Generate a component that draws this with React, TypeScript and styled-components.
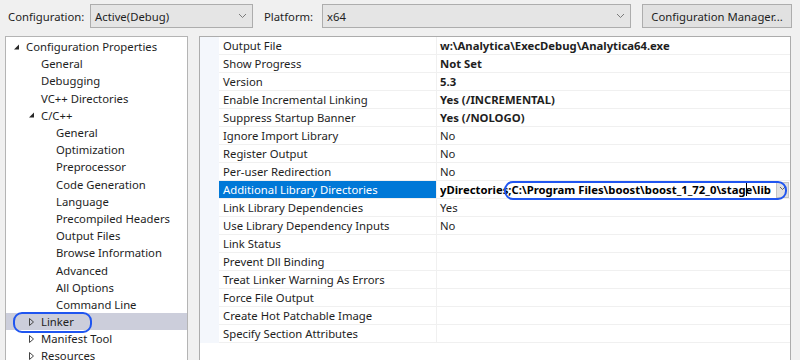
import React from "react";
import styled, { createGlobalStyle } from "styled-components";

const GlobalStyle = createGlobalStyle`
  html, body {
    margin: 0;
    padding: 0;
    background: #f0f0f0;
  }
  * {
    box-sizing: border-box;
  }
`;

const FONT = `"Noto Sans", "Open Sans", sans-serif`;

type TreeItem = {
  label: string;
  level: number;
  glyph?: "open" | "closed";
  selected?: boolean;
};

const treeItems: TreeItem[] = [
  { label: "Configuration Properties", level: 0, glyph: "open" },
  { label: "General", level: 1 },
  { label: "Debugging", level: 1 },
  { label: "VC++ Directories", level: 1 },
  { label: "C/C++", level: 1, glyph: "open" },
  { label: "General", level: 2 },
  { label: "Optimization", level: 2 },
  { label: "Preprocessor", level: 2 },
  { label: "Code Generation", level: 2 },
  { label: "Language", level: 2 },
  { label: "Precompiled Headers", level: 2 },
  { label: "Output Files", level: 2 },
  { label: "Browse Information", level: 2 },
  { label: "Advanced", level: 2 },
  { label: "All Options", level: 2 },
  { label: "Command Line", level: 2 },
  { label: "Linker", level: 1, glyph: "closed", selected: true },
  { label: "Manifest Tool", level: 1, glyph: "closed" },
  { label: "Resources", level: 1, glyph: "closed" },
];

type Prop = {
  name: string;
  value?: string;
  bold?: boolean;
  editing?: boolean;
};

const props: Prop[] = [
  { name: "Output File", value: "w:\\Analytica\\ExecDebug\\Analytica64.exe", bold: true },
  { name: "Show Progress", value: "Not Set", bold: true },
  { name: "Version", value: "5.3", bold: true },
  { name: "Enable Incremental Linking", value: "Yes (/INCREMENTAL)", bold: true },
  { name: "Suppress Startup Banner", value: "Yes (/NOLOGO)", bold: true },
  { name: "Ignore Import Library", value: "No" },
  { name: "Register Output", value: "No" },
  { name: "Per-user Redirection", value: "No" },
  { name: "Additional Library Directories", editing: true },
  { name: "Link Library Dependencies", value: "Yes" },
  { name: "Use Library Dependency Inputs", value: "No" },
  { name: "Link Status" },
  { name: "Prevent Dll Binding" },
  { name: "Treat Linker Warning As Errors" },
  { name: "Force File Output" },
  { name: "Create Hot Patchable Image" },
  { name: "Specify Section Attributes" },
];

const Chevron = () => (
  <svg width="9" height="6" viewBox="0 0 9 6">
    <polyline points="1,1 4.5,4.5 8,1" fill="none" stroke="#7a7a7a" strokeWidth="1" />
  </svg>
);

const Glyph: React.FC<{ kind?: "open" | "closed" }> = ({ kind }) => {
  if (kind === "open")
    return (
      <svg width="7" height="8" viewBox="0 0 7 8">
        <polygon points="6,1.5 6,6.5 1,6.5" fill="#262626" />
      </svg>
    );
  if (kind === "closed")
    return (
      <svg width="7" height="10" viewBox="0 0 7 10">
        <polygon points="1.5,1.5 5.5,5 1.5,8.5" fill="none" stroke="#444" strokeWidth="1" />
      </svg>
    );
  return null;
};

export default function App() {
  return (
    <>
      <GlobalStyle />
      <Window>
        <Toolbar>
          <Label>Configuration:</Label>
          <Combo $width={163}>
            <span>Active(Debug)</span>
            <Chevron />
          </Combo>
          <Label $gap={11}>Platform:</Label>
          <Combo $width={309}>
            <span>x64</span>
            <Chevron />
          </Combo>
          <Button>Configuration Manager...</Button>
        </Toolbar>
        <Body>
          <TreePanel>
            {treeItems.map((item, i) => (
              <TreeRow key={i} $selected={item.selected}>
                <GlyphBox $level={item.level}>
                  <Glyph kind={item.glyph} />
                </GlyphBox>
                <TreeLabel>{item.label}</TreeLabel>
                {item.selected && <TreeCallout />}
              </TreeRow>
            ))}
          </TreePanel>
          <GridPanel>
            <Grid>
              {props.map((p, i) => (
                <GridRow key={i}>
                  <Margin />
                  <NameCell $selected={p.editing}>{p.name}</NameCell>
                  <ValueCell $bold={p.bold}>
                    {p.editing ? (
                      <Editor>
                        <EditText>
                          yDirectories;C:\Program Files\boost\boost_1_72_0\stag
                          <Caret />
                          e\lib
                        </EditText>
                        <DropButton>
                          <svg width="7" height="5" viewBox="0 0 7 5">
                            <polyline points="1,1 3.5,3.5 6,1" fill="none" stroke="#666" strokeWidth="1" />
                          </svg>
                        </DropButton>
                        <EditCallout />
                      </Editor>
                    ) : (
                      p.value
                    )}
                  </ValueCell>
                </GridRow>
              ))}
            </Grid>
          </GridPanel>
        </Body>
      </Window>
    </>
  );
}

const Window = styled.div`
  width: 800px;
  height: 360px;
  overflow: hidden;
  background: #f0f0f0;
  font-family: ${FONT};
  font-size: 11.3px;
  color: #1e1e1e;
`;

const Toolbar = styled.div`
  display: flex;
  align-items: center;
  height: 24px;
  margin-top: 4px;
  padding-left: 8px;
`;

const Label = styled.div<{ $gap?: number }>`
  margin-left: ${(p) => p.$gap || 0}px;
  width: ${(p) => (p.$gap ? 58 : 82)}px;
  white-space: nowrap;
`;

const Combo = styled.div<{ $width: number }>`
  width: ${(p) => p.$width}px;
  height: 24px;
  display: flex;
  align-items: center;
  justify-content: space-between;
  padding: 0 5px 0 4px;
  background: #e5e5e5;
  border: 1px solid #adadad;
`;

const Button = styled.div`
  margin-left: 11px;
  width: 150px;
  height: 24px;
  display: flex;
  align-items: center;
  justify-content: center;
  background: #e1e1e1;
  border: 1px solid #adadad;
`;

const Body = styled.div`
  display: flex;
  gap: 11px;
  margin-top: 8px;
  padding: 0 9px 0 5px;
`;

const TreePanel = styled.div`
  width: 183px;
  height: 340px;
  flex-shrink: 0;
  background: #ffffff;
  border: 1px solid #b4b4b4;
  padding-top: 1px;
  overflow: hidden;
`;

const TreeRow = styled.div<{ $selected?: boolean }>`
  position: relative;
  display: flex;
  align-items: center;
  height: 17.2px;
  background: ${(p) => (p.$selected ? "#cccedb" : "transparent")};
  white-space: nowrap;
`;

const GlyphBox = styled.div<{ $level: number }>`
  width: 13px;
  margin-left: ${(p) => 7 + p.$level * 15}px;
  display: flex;
  align-items: center;
`;

const TreeLabel = styled.span`
  line-height: 17px;
`;

const TreeCallout = styled.div`
  position: absolute;
  left: 7px;
  top: -1.5px;
  width: 79px;
  height: 21px;
  border: 2.5px solid #1f55f0;
  border-radius: 9px;
`;

const GridPanel = styled.div`
  flex: 1;
  height: 340px;
  background: #ffffff;
  border: 1px solid #acacac;
  overflow: hidden;
`;

const Grid = styled.div`
  display: flex;
  flex-direction: column;
`;

const GridRow = styled.div`
  display: grid;
  grid-template-columns: 19px 218px 1fr;
  height: 18px;
`;

const Margin = styled.div`
  background: #f4f7fc;
`;

const NameCell = styled.div<{ $selected?: boolean }>`
  padding-left: 4px;
  line-height: 17px;
  white-space: nowrap;
  overflow: hidden;
  border-bottom: 1px solid #f0f0f0;
  border-right: 1px solid #f0f0f0;
  background: ${(p) => (p.$selected ? "#0078d7" : "#ffffff")};
  color: ${(p) => (p.$selected ? "#ffffff" : "#1e1e1e")};
`;

const ValueCell = styled.div<{ $bold?: boolean }>`
  position: relative;
  padding-left: 3px;
  line-height: 17px;
  white-space: nowrap;
  border-bottom: 1px solid #f0f0f0;
  font-weight: ${(p) => (p.$bold ? 700 : 400)};
`;

const Editor = styled.div`
  display: flex;
  align-items: center;
  height: 17px;
  font-weight: 700;
  color: #000;
`;

const EditText = styled.div`
  flex: 1;
  overflow: hidden;
  white-space: nowrap;
`;

const Caret = styled.span`
  display: inline-block;
  width: 1px;
  height: 13px;
  margin: 0 -1px 0 0;
  vertical-align: -2px;
  background: #000;
`;

const DropButton = styled.div`
  width: 13px;
  height: 16px;
  margin-right: 1px;
  display: flex;
  align-items: flex-start;
  justify-content: center;
  padding-top: 3px;
  background: #e1e1e1;
  border: 1px solid #c4c4c4;
`;

const EditCallout = styled.div`
  position: absolute;
  left: 67px;
  top: 0;
  right: 3px;
  height: 19px;
  border: 2.5px solid #1f55f0;
  border-radius: 9px;
  pointer-events: none;
`;
